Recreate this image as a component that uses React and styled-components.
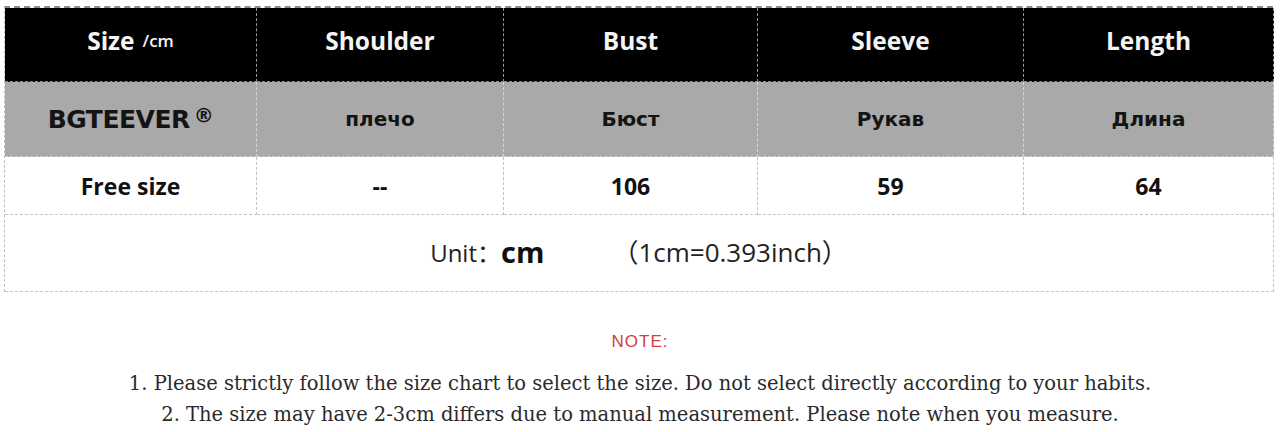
import styled, { createGlobalStyle } from "styled-components";

const Global = createGlobalStyle`
  body {
    margin: 0;
    background: #fff;
    font-family: "Open Sans", sans-serif;
  }
`;

const header = ["Shoulder", "Bust", "Sleeve", "Length"];
const ru = ["плечо", "Бюст", "Рукав", "Длина"];
const values = ["--", "106", "59", "64"];

function App() {
  return (
    <Page>
      <Global />
      <Table>
        <HeadCell>
          Size <Small>/cm</Small>
        </HeadCell>
        {header.map((h) => (
          <HeadCell key={h}>{h}</HeadCell>
        ))}

        <GreyCell $brand>
          BGTEEVER <Reg>®</Reg>
        </GreyCell>
        {ru.map((r) => (
          <GreyCell key={r}>{r}</GreyCell>
        ))}

        <ValueCell>Free size</ValueCell>
        {values.map((v, i) => (
          <ValueCell key={i}>{v}</ValueCell>
        ))}

        <UnitRow>
          <span>Unit：</span>
          <Cm>cm</Cm>
          <Conv>（1cm=0.393inch）</Conv>
        </UnitRow>
      </Table>

      <Notes>
        <NoteTitle>NOTE:</NoteTitle>
        <NoteLine>
          1. Please strictly follow the size chart to select the size. Do not select directly according to your habits.
        </NoteLine>
        <NoteLine>
          2. The size may have 2-3cm differs due to manual measurement. Please note when you measure.
        </NoteLine>
      </Notes>
    </Page>
  );
}

export default App;

const Page = styled.div`
  width: 1280px;
  height: 432px;
  padding: 6px 0 0 4px;
  box-sizing: border-box;
  overflow: hidden;
`;

const Table = styled.div`
  display: grid;
  grid-template-columns: 252px 247px 254px 266px 250px;
  grid-template-rows: 74px 75px 58px 77px;
  width: 1269px;
  border-top: 2px dashed #8a8a8a;
  border-left: 1px dashed #bdbdbd;
  box-sizing: border-box;
`;

const Cell = styled.div`
  display: flex;
  align-items: center;
  justify-content: center;
  border-right: 1px dashed #c4c4c4;
  border-bottom: 1px dashed #c4c4c4;
  box-sizing: border-box;
`;

const HeadCell = styled(Cell)`
  background: #000;
  color: #f4f4f4;
  font-family: "Open Sans", sans-serif;
  font-weight: 700;
  font-size: 24.5px;
  padding-bottom: 8px;
  border-right-color: #9a9a9a;
  border-bottom-color: #888;
`;

const Small = styled.span`
  font-size: 17px;
  font-weight: 600;
  margin-left: 8px;
`;

const GreyCell = styled(Cell)`
  background: #a9a9a9;
  color: #141414;
  font-family: "DejaVu Sans", sans-serif;
  font-weight: 700;
  font-size: ${(p) => (p.$brand ? "25px" : "20px")};
  letter-spacing: ${(p) => (p.$brand ? "-0.5px" : "0")};
  border-right-color: #d6d6d6;
  border-bottom-color: #d0d0d0;
`;

const Reg = styled.span`
  font-size: 20px;
  margin-left: 4px;
  position: relative;
  top: -4px;
`;

const ValueCell = styled(Cell)`
  background: #fff;
  color: #111;
  font-family: "Open Sans", sans-serif;
  font-weight: 700;
  font-size: 23px;
`;

const UnitRow = styled(Cell)`
  grid-column: 1 / -1;
  font-family: "Open Sans", "Noto Sans CJK SC", sans-serif;
  font-size: 24px;
  color: #222;
  padding-bottom: 4px;
`;

const Cm = styled.span`
  font-weight: 700;
  font-size: 29px;
  color: #111;
`;

const Conv = styled.span`
  font-size: 26px;
  margin-left: 68px;
`;

const Notes = styled.div`
  display: flex;
  flex-direction: column;
  align-items: center;
  margin-top: 41px;
  padding-right: 4px;
`;

const NoteTitle = styled.div`
  font-family: "Liberation Sans", sans-serif;
  font-size: 17px;
  color: #d2403a;
  letter-spacing: 1px;
  line-height: 18px;
  margin-bottom: 17px;
`;

const NoteLine = styled.div`
  font-family: "DejaVu Serif", serif;
  font-size: 19.5px;
  color: #2a2a2a;
  line-height: 31px;
`;
